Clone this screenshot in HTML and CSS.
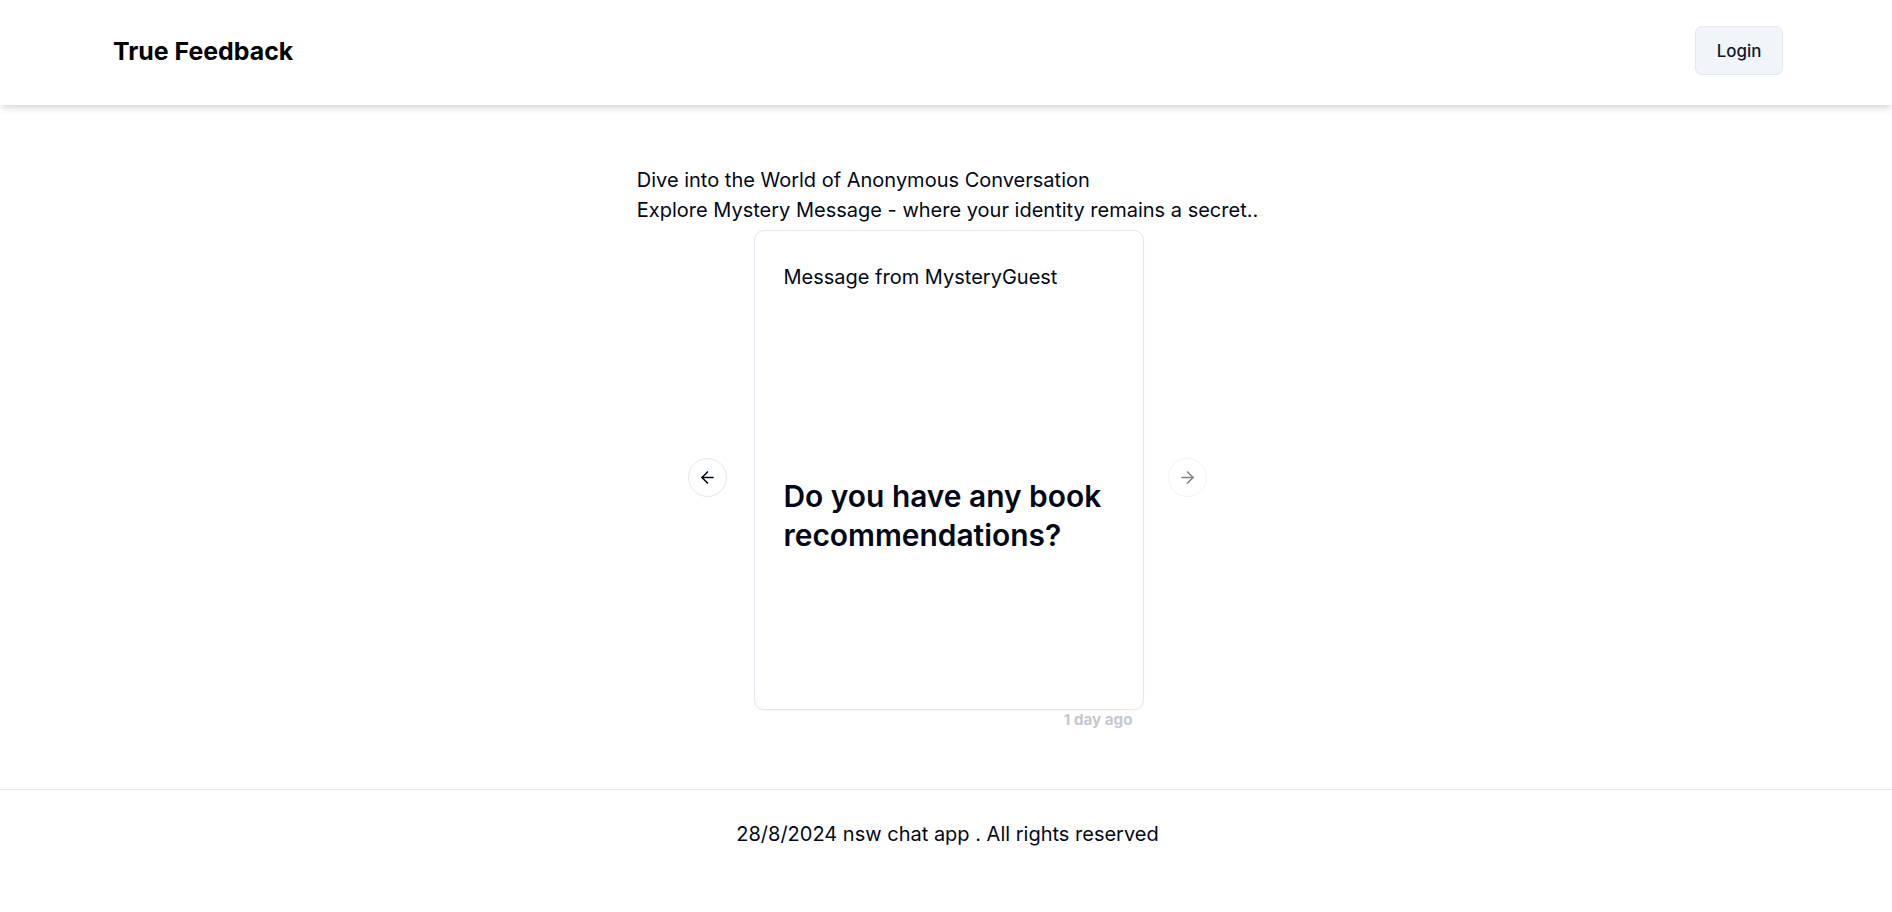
FILE: index.html
```html
<!DOCTYPE html>
<html lang="en">
<head>
<meta charset="utf-8">
<title>True Feedback</title>
<link rel="stylesheet" href="styles.css">
</head>
<body>
<header class="site-header">
  <a class="logo" href="#">True Feedback</a>
  <button class="btn-login" type="button">Login</button>
</header>
<main class="main">
  <section class="intro">
    <div class="intro-text">
      <p class="intro-line">Dive into the World of Anonymous Conversation</p>
      <p class="intro-line">Explore Mystery Message - where your identity remains a secret..</p>
    </div>
  </section>
  <div class="carousel">
    <div class="slide">
      <div class="card">
        <div class="card-header">Message from MysteryGuest</div>
        <div class="card-content">
          <span class="question">Do you have any book recommendations?</span>
        </div>
      </div>
      <p class="time">1 day ago</p>
    </div>
    <button class="nav-btn nav-prev" type="button" aria-label="Previous slide">
      <svg viewBox="0 0 24 24" width="19" height="19" fill="none" stroke="currentColor" stroke-width="2" stroke-linecap="round" stroke-linejoin="round"><path d="m12 19-7-7 7-7"/><path d="M19 12H5"/></svg>
    </button>
    <button class="nav-btn nav-next" type="button" aria-label="Next slide" disabled>
      <svg viewBox="0 0 24 24" width="19" height="19" fill="none" stroke="currentColor" stroke-width="2" stroke-linecap="round" stroke-linejoin="round"><path d="M5 12h14"/><path d="m12 5 7 7-7 7"/></svg>
    </button>
  </div>
</main>
<footer class="site-footer">28/8/2024 nsw chat app . All rights reserved</footer>
</body>
</html>
```

FILE: styles.css
```css
* {
  box-sizing: border-box;
}

html, body {
  margin: 0;
  padding: 0;
  background: #ffffff;
}

body {
  font-family: Inter, "Noto Sans", "Liberation Sans", sans-serif;
  color: #020817;
}

.site-header {
  height: 105px;
  padding: 0 109px 4px 113px;
  display: flex;
  align-items: center;
  justify-content: space-between;
  background: #ffffff;
  box-shadow: 0 5px 7px -1px rgba(0, 0, 0, 0.1), 0 2px 5px -2px rgba(0, 0, 0, 0.1);
  position: relative;
  z-index: 1;
}

.logo {
  font-size: 24.9px;
  font-weight: 700;
  color: #000000;
  text-decoration: none;
  line-height: 34px;
}

.btn-login {
  width: 88px;
  height: 49px;
  border: 1px solid #e2e8f0;
  border-radius: 7px;
  background: #f1f5f9;
  color: #0f172a;
  font-family: inherit;
  font-size: 16.9px;
  font-weight: 500;
  cursor: pointer;
  padding: 0;
}

.main {
  padding: 60px 0 60px 3px;
  display: flex;
  flex-direction: column;
  align-items: center;
}

.intro {
  display: flex;
  justify-content: center;
  width: 100%;
}

.intro-text {
  text-align: left;
}

.intro-line {
  margin: 0;
  font-size: 20px;
  line-height: 30px;
  color: #020817;
}

.carousel {
  position: relative;
  width: 390px;
  margin: 5px 0 0 2px;
}

.card {
  border: 1px solid #e2e8f0;
  border-radius: 10px;
  background: #ffffff;
  box-shadow: 0 1px 2px rgba(0, 0, 0, 0.04);
}

.card-header {
  padding: 29px;
  font-size: 20px;
  line-height: 34px;
  color: #020817;
}

.card-content {
  height: 386px;
  padding: 29px;
  display: flex;
  align-items: center;
}

.question {
  font-size: 29.9px;
  line-height: 38.6px;
  font-weight: 600;
  color: #020817;
}

.time {
  margin: 0;
  padding-right: 11px;
  text-align: right;
  font-size: 15.2px;
  line-height: 19px;
  font-weight: 700;
  color: #c6c8ce;
}

.nav-btn {
  position: absolute;
  top: 228px;
  width: 39px;
  height: 39px;
  border-radius: 50%;
  border: 1px solid #e2e8f0;
  background: #ffffff;
  color: #020817;
  display: flex;
  align-items: center;
  justify-content: center;
  padding: 0;
  cursor: pointer;
}

.nav-prev {
  left: -65.5px;
}

.nav-next {
  right: -63.5px;
}

.nav-btn:disabled {
  opacity: 0.5;
  cursor: default;
}

.site-footer {
  border-top: 1px solid #e2e8f0;
  padding: 30px 29px 28px 32px;
  text-align: center;
  font-size: 20px;
  line-height: 29px;
  color: #020817;
}
```
